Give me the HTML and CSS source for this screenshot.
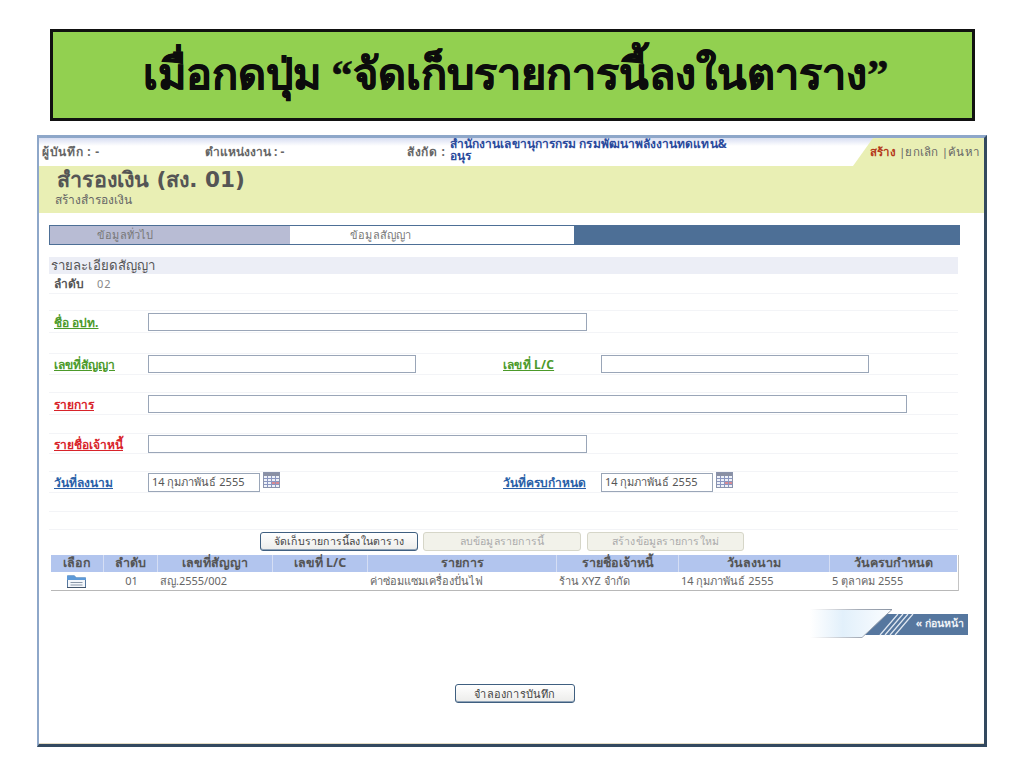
FILE: index.html
```html
<!DOCTYPE html>
<html lang="th">
<head>
<meta charset="utf-8">
<title>สำรองเงิน</title>
<link rel="stylesheet" href="styles.css">
</head>
<body>
<svg class="defs" width="0" height="0" aria-hidden="true">
  <symbol id="cal" viewBox="0 0 17 16">
    <rect x="0.5" y="0.5" width="16" height="15" fill="#eef1f8" stroke="#8a93ac"/>
    <rect x="1" y="1" width="15" height="3" fill="#8a90a4"/>
    <path d="M1 6.500h15M1 9.500h15M1 12.500h15M4.500 4v11M8.500 4v11M12.500 4v11" stroke="#8a96c0" fill="none"/>
    <rect x="9" y="10" width="3" height="2" fill="#d98a94"/>
    <rect x="13" y="10" width="3" height="2" fill="#d98a94"/>
  </symbol>
</svg>
<div class="banner">เมื่อกดปุ่ม “จัดเก็บรายการนี้ลงในตาราง”</div>
<div class="window">
  <div class="hdr">
    <span class="h1">ผู้บันทึก : -</span>
    <span class="h2">ตำแหน่งงาน : -</span>
    <span class="h3">สังกัด :</span>
    <span class="h4">สำนักงานเลขานุการกรม กรมพัฒนาพลังงานทดแทน&amp;<br>อนุร</span>
    <div class="corner"></div>
    <span class="links"><b>สร้าง</b> |ยกเลิก |ค้นหา</span>
  </div>
  <div class="band">
    <div class="t1">สำรองเงิน (สง. 01)</div>
    <div class="t2">สร้างสำรองเงิน</div>
  </div>
  <div class="tabs">
    <div class="tab a">ข้อมูลทั่วไป</div>
    <div class="tab b">ข้อมูลสัญญา</div>
    <div class="tab c"></div>
  </div>
  <div class="sect">รายละเอียดสัญญา</div>
  <div class="form">
    <div class="row r20"><b class="seq">ลำดับ</b><span class="seqv">02</span></div>
    <div class="row r17"></div>
    <div class="row r22"><a class="lab green">ชื่อ อปท.</a><div class="inp w439"></div></div>
    <div class="row r21"></div>
    <div class="row r21"><a class="lab green">เลขที่สัญญา</a><div class="inp w268"></div><a class="lab2 green">เลขที่ L/C</a><div class="inp w268"></div></div>
    <div class="row r18"></div>
    <div class="row r22"><a class="lab red">รายการ</a><div class="inp w759"></div></div>
    <div class="row r19"></div>
    <div class="row r20"><a class="lab red">รายชื่อเจ้าหนี้</a><div class="inp w439"></div></div>
    <div class="row r18"></div>
    <div class="row r21"><a class="lab blue">วันที่ลงนาม</a><div class="inp date">14 กุมภาพันธ์ 2555</div><svg class="calico"><use href="#cal"/></svg><a class="lab2b blue">วันที่ครบกำหนด</a><div class="inp date">14 กุมภาพันธ์ 2555</div><svg class="calico"><use href="#cal"/></svg></div>
    <div class="row r19"></div>
    <div class="row r18"></div>
  </div>
  <div class="btns">
    <div class="btn on bsave">จัดเก็บรายการนี้ลงในตาราง</div>
    <div class="btn off bdel">ลบข้อมูลรายการนี้</div>
    <div class="btn off bnew">สร้างข้อมูลรายการใหม่</div>
  </div>
  <div class="tbl">
    <div class="thead">
      <div class="c1">เลือก</div><div class="c2">ลำดับ</div><div class="c3">เลขที่สัญญา</div><div class="c4">เลขที่ L/C</div><div class="c5">รายการ</div><div class="c6">รายชื่อเจ้าหนี้</div><div class="c7">วันลงนาม</div><div class="c8">วันครบกำหนด</div>
    </div>
    <div class="tbody">
      <div class="c1"><svg class="folder" viewBox="0 0 19 13"><path d="M0.500 12.500V1h7l1.500 2h9.500v9.500z" fill="#f4f7fb" stroke="#56789f"/><path d="M0 0.500h7.500l1.500 2h10v2.500H0z" fill="#5e9ad8"/><path d="M3.500 7.500h12M3.500 10h12" stroke="#8a97a8"/><path d="M0 12.500h19" stroke="#44566c"/></svg></div>
      <div class="c2 ctr">01</div><div class="c3">สญ.2555/002</div><div class="c4"></div><div class="c5">ค่าซ่อมแซมเครื่องปั่นไฟ</div><div class="c6">ร้าน XYZ จำกัด</div><div class="c7">14 กุมภาพันธ์ 2555</div><div class="c8">5 ตุลาคม 2555</div>
    </div>
  </div>
  <div class="prevwrap">
    <div class="prev">
      <svg class="prevbg" viewBox="0 0 158 29" width="158" height="29">
        <defs>
          <linearGradient id="pg" x1="0" x2="1" y1="0" y2="0">
            <stop offset="0" stop-color="#fff"/><stop offset="0.4" stop-color="#e2f0fb"/><stop offset="1" stop-color="#fbfdff"/>
          </linearGradient>
          <linearGradient id="ps" x1="0" x2="1" y1="0" y2="0">
            <stop offset="0" stop-color="#fff"/><stop offset="0.6" stop-color="#a6adb8"/><stop offset="1" stop-color="#8b95a4"/>
          </linearGradient>
        </defs>
        <path d="M66 5H158V26H48z" fill="#56779f"/>
        <path d="M0 0H82L52 28.500H0z" fill="url(#pg)"/>
        <path d="M0 0.500H82L52 28.500H0" fill="none" stroke="url(#ps)"/>
        <path d="M70 26L88 5M75 26L93 5M80 26L98 5M85 26L103 5" stroke="#dfe7f1" stroke-width="1.200"/>
      </svg>
      <span class="prevtxt">« ก่อนหน้า</span>
    </div>
  </div>
  <div class="savewrap"><div class="btn on bsim">จำลองการบันทึก</div></div>
</div>
</body>
</html>
```
FILE: styles.css
```css
body{margin:0;background:#fff;font-family:Tahoma,"Noto Sans","DejaVu Sans",sans-serif;font-size:11px;color:#555}
.defs{position:absolute}
.banner{margin:29px 49px 0 50px;height:86px;padding-left:6px;border:3px solid #111;background:#92d050;color:#0c0c0c;font-family:"Liberation Serif",serif;font-size:43.200px;font-weight:700;text-align:center;line-height:86px;-webkit-text-stroke:.5px #0c0c0c}
.window{box-sizing:border-box;margin:14px 37px 0 37px;height:612px;border-style:solid;border-width:3px 3px 3px 2px;border-color:#8ea7c9 #33495f #33495f #8ea7c9;box-shadow:inset 0 -1px #e4dcc4}
.hdr{position:relative;height:28px;background:linear-gradient(#d8def2,#fff 8px)}
.hdr span{position:absolute;top:4px;font-size:12px;font-weight:700;color:#666;white-space:nowrap}
.hdr .h1{left:3px;letter-spacing:.7px}
.h2{left:166px}
.hdr .h3{left:368px;letter-spacing:.7px}
.hdr .h4{left:411px;top:0;color:#2a4a9c;line-height:12px;font-size:12px;letter-spacing:.07px}
.corner{position:absolute;right:0;top:0;bottom:0;width:131px;background:#e9efb4;clip-path:polygon(20px 0,100% 0,100% 100%,0 100%)}
.hdr .links{right:5px;top:5px;font-weight:400;font-size:11.500px;letter-spacing:.2px}
.links b{color:#b5391a}
.band{background:#e9efb4;height:47px;padding:0 0 0 18px}
.t1{font-family:"DejaVu Sans",sans-serif;font-size:21.500px;font-weight:700;line-height:26px;color:#555;padding-top:1px}
.t2{font-size:12px;line-height:14px;margin-left:-2px;color:#666}
.tabs{display:flex;margin:12px 24px 0 10px;height:20px;box-sizing:border-box;border:1px solid #4d6f96;border-right:0}
.tab{line-height:18px;font-size:11px;color:#777;letter-spacing:.2px;box-sizing:border-box}
.a{width:240px;background:#b8bcd4;padding-left:47px}
.b{width:284px;background:#fff;padding-left:60px}
.c{flex:1;background:#4d6f96}
.sect{background:#eceef6;margin:12px 26px 0 10px;height:17px;line-height:16px;font-size:13.200px;padding-left:2px;color:#555}
.form{margin:0 26px 0 10px}
.row{display:flex;align-items:center;box-sizing:border-box;border-bottom:1px solid #f3f4f7;padding-left:5px}
.r17{height:17px}.r18{height:18px}.r19{height:19px}.r20{height:20px}.r21{height:21px}.r22{height:22px}
.seq{width:43px;font-size:12px;color:#555}
.seqv{color:#888;letter-spacing:1px}
.lab{width:94px;font-size:12px;font-weight:700;text-decoration:underline;white-space:nowrap;padding-top:1px}
.lab2,.lab2b{width:98px;font-size:12px;font-weight:700;text-decoration:underline;white-space:nowrap;padding-top:1px}
.lab2{margin-left:87px;letter-spacing:.2px}
.lab2b{margin-left:223px}
.green{color:#4c9a2a}.red{color:#d8232a}.blue{color:#2a5fa8}
.inp{box-sizing:border-box;height:18px;border:1px solid #9aa6b8;background:#fff;flex:none}
.w439{width:439px}.w268{width:268px}.w759{width:759px}
.date{width:112px;line-height:16px;padding-left:3px;font-size:11px;white-space:nowrap;height:19px}
.calico{width:17px;height:16px;margin:-4px 0 0 3px;flex:none}
.btns{display:flex;margin:2px 0 0 221px;height:23px}
.btn{box-sizing:border-box;height:19px;line-height:17px;text-align:center;font-size:10.500px;border-radius:3px;flex:none;letter-spacing:.2px}
.on{border:1px solid #3f5f80;color:#444;background:linear-gradient(#fff,#ececea);box-shadow:inset 0 -1px #8fa3b8}
.off{border:1px solid #d6d6c8;color:#aaa;background:#f2f2ea}
.bsave{width:158px;margin-right:5px}
.bdel{width:158px;margin-right:6px}
.bnew{width:157px}
.bsim{width:120px;font-size:11px}
.tbl{margin:0 26px 0 12px;box-shadow:1px 0 #c4c4c4}
.thead,.tbody{display:flex}
.thead{height:17px;line-height:16px;font-size:12.500px;font-weight:700;color:#555;text-align:center}
.thead>div{background:#b2c5ee;box-sizing:border-box;border-left:1px solid #d5def4}
.thead>div:first-child{border-left:0}
.tbody{height:18px;line-height:18px;border-bottom:1px solid #b8b8b8;color:#666}
.tbody .ctr{text-align:center}
.c1{width:52px;text-align:center}.c2{width:54px}.c3{width:115px}.c4{width:95px}.c5{width:189px}.c6{width:122px}.c7{width:151px}.c8{width:128px}
.tbody>div{padding-left:3px;box-sizing:border-box;white-space:nowrap}
.tbody .c1{padding:3px 2px 0 0}
.folder{width:19px;height:13px;display:block;margin:0 auto}
.prevwrap{display:flex;justify-content:flex-end;margin:18px 16px 0 0}
.prev{position:relative;width:158px;height:29px}
.prevbg{display:block}
.prevtxt{position:absolute;right:4px;top:7px;line-height:14px;font-size:10.500px;font-weight:700;color:#eef2f7}
.savewrap{display:flex;justify-content:center;margin:46px 0 0 7px}
```
